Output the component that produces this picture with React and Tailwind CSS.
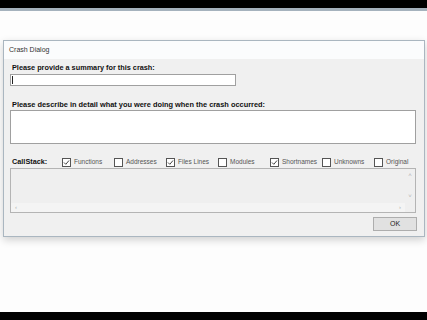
import React from "react";

const Box = ({ checked }) => (
  <svg width="9" height="9" viewBox="0 0 9 9" className="shrink-0">
    <rect x="0.5" y="0.5" width="8" height="8" fill="#ffffff" stroke="#555555" strokeWidth="1" />
    {checked && <path d="M2 4.5 L3.8 6.3 L7 2.5" fill="none" stroke="#444444" strokeWidth="1" />}
  </svg>
);

const options = [
  { label: "Functions", checked: true },
  { label: "Addresses", checked: false },
  { label: "Files Lines", checked: true },
  { label: "Modules", checked: false },
  { label: "Shortnames", checked: true },
  { label: "Unknowns", checked: false },
  { label: "Original", checked: false },
];

export default function App() {
  return (
    <div className="w-[427px] h-[320px] flex flex-col bg-[#fdfdfd] overflow-hidden font-['Liberation_Sans',Arial,sans-serif]">
      {/* top taskbar edge */}
      <div className="h-[8px] bg-black" />
      <div className="h-[3px] bg-[#a5b2bd]" />

      <div className="flex-1 pt-[29px] pl-[3px]">
        {/* dialog window */}
        <div className="w-[422px] border border-[#aab6c0] shadow-[0_3px_8px_rgba(0,0,0,0.18)] bg-[#f0f0f0]">
          <div className="h-[18px] bg-[#fbfcfd] flex items-center pl-[5px] text-[7px] text-[#333]">
            Crash Dialog
          </div>

          <div className="px-[6px] pt-[4px] pb-[5px]">
            <div className="h-[10px] leading-[10px] pl-[2px] text-[7.3px] font-bold text-[#111]">
              Please provide a summary for this crash:
            </div>
            <div className="mt-[1px] w-[226px] h-[12px] bg-white border border-[#a0a0a0] flex items-center pl-[1px]">
              <div className="w-px h-[8px] bg-[#222]" />
            </div>

            <div className="mt-[14px] h-[10px] leading-[10px] pl-[2px] text-[7.4px] font-bold text-[#111]">
              Please describe in detail what you were doing when the crash occurred:
            </div>
            <div className="w-[406px] h-[34px] bg-white border border-[#a0a0a0]" />

            {/* call stack options */}
            <div className="mt-[13px] h-[10px] flex items-center pl-[2px] overflow-visible">
              <div className="w-[50px] shrink-0 text-[7.3px] font-bold text-[#111]">CallStack:</div>
              {options.map((o) => (
                <div key={o.label} className="w-[52px] shrink-0 flex items-center gap-[3px]">
                  <Box checked={o.checked} />
                  <span className="text-[6.5px] text-[#555] whitespace-nowrap">{o.label}</span>
                </div>
              ))}
            </div>

            <div className="mt-[1px] w-[406px] h-[45px] border border-[#b4b4b4] bg-[#efefef] flex flex-col">
              <div className="flex-1 flex">
                <div className="flex-1" />
                <div className="w-[10px] flex flex-col items-center justify-between py-[2px] text-[6px] text-[#b0b0b0]">
                  <span>˄</span>
                  <span>˅</span>
                </div>
              </div>
              <div className="h-[9px] mr-[10px] flex items-center justify-between px-[4px] text-[6px] text-[#b0b0b0] bg-[#f4f4f4]">
                <span>‹</span>
                <span>›</span>
              </div>
            </div>

            <div className="mt-[4px] flex justify-end pr-[1px]">
              <div className="w-[44px] h-[14px] border border-[#adadad] bg-[#e1e1e1] flex items-center justify-center text-[7px] text-[#222]">
                OK
              </div>
            </div>
          </div>
        </div>
      </div>

      <div className="h-[8px] bg-black" />
    </div>
  );
}
